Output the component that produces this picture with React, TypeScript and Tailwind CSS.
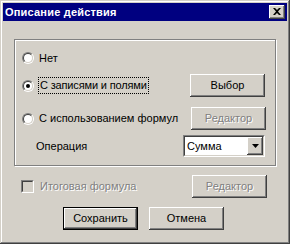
import React from 'react'

const bevelOut =
  'shadow-[inset_-1px_-1px_0_#404040,inset_1px_1px_0_#ffffff,inset_-2px_-2px_0_#808080,inset_2px_2px_0_#d4d0c8]'

function Radio({ checked }: { checked?: boolean }) {
  return (
    <div className="w-[12px] h-[12px] rounded-full border border-t-[#808080] border-l-[#808080] border-b-white border-r-white flex-shrink-0">
      <div className="w-full h-full rounded-full border border-t-[#404040] border-l-[#404040] border-b-[#d4d0c8] border-r-[#d4d0c8] bg-white flex items-center justify-center">
        {checked && <div className="w-[4px] h-[4px] rounded-full bg-black" />}
      </div>
    </div>
  )
}

function Button({
  children,
  disabled,
  isDefault,
  className = '',
}: {
  children: React.ReactNode
  disabled?: boolean
  isDefault?: boolean
  className?: string
}) {
  return (
    <div
      className={
        'w-[75px] h-[23px] flex-shrink-0 bg-[#d4d0c8] ' +
        (isDefault ? 'border border-black ' : '') +
        className
      }
    >
      <div
        className={
          'w-full h-full flex items-center justify-center ' +
          bevelOut +
          (disabled ? ' text-[#808080] [text-shadow:1px_1px_0_#ffffff]' : ' text-black')
        }
      >
        {children}
      </div>
    </div>
  )
}

export default function App() {
  return (
    <div className="w-[290px] h-[244px] bg-[#d4d0c8] p-[3px] flex flex-col font-['Liberation_Sans',Arial,sans-serif] text-[11px] leading-none text-black shadow-[inset_-1px_-1px_0_#404040,inset_1px_1px_0_#d4d0c8,inset_-2px_-2px_0_#808080,inset_2px_2px_0_#ffffff]">
      {/* Title bar */}
      <div className="h-[18px] bg-[#000080] flex items-center pl-[2px] pr-[2px]">
        <span className="text-white font-bold text-[11px] tracking-[0.2px]">Описание действия</span>
        <div className={'ml-auto w-[16px] h-[14px] bg-[#d4d0c8] flex items-center justify-center ' + bevelOut}>
          <svg width="8" height="7" viewBox="0 0 8 7" className="-mt-[1px]">
            <path d="M0 0h2l2 2 2-2h2L5 3.5 8 7H6L4 5 2 7H0l3-3.5z" fill="#000" />
          </svg>
        </div>
      </div>

      {/* Group box */}
      <div className="ml-[11px] mt-[18px] w-[262px] h-[127px] border border-[#808080] shadow-[1px_1px_0_#ffffff,inset_1px_1px_0_#ffffff] flex flex-col pt-[10px]">
        <div className="h-[16px] flex items-center pl-[7px]">
          <Radio />
          <span className="ml-[5px]">Нет</span>
        </div>

        <div className="mt-[8px] h-[23px] flex items-center pl-[7px] pr-[10px]">
          <Radio checked />
          <span className="ml-[4px] h-[17px] px-[1px] flex items-center border border-dotted border-black tracking-[-0.15px]">
            С записями и полями
          </span>
          <Button className="ml-auto">Выбор</Button>
        </div>

        <div className="mt-[10px] h-[23px] flex items-center pl-[7px] pr-[9px]">
          <Radio />
          <span className="ml-[5px]">С использованием формул</span>
          <Button disabled className="ml-auto">Редактор</Button>
        </div>

        <div className="mt-[5px] h-[22px] flex items-center pl-[21px] pr-[10px]">
          <span>Операция</span>
          <div className="ml-auto w-[82px] h-[22px] border border-t-[#808080] border-l-[#808080] border-b-white border-r-white">
            <div className="w-full h-full border border-t-[#404040] border-l-[#404040] border-b-[#d4d0c8] border-r-[#d4d0c8] bg-white flex items-center">
              <span className="pl-[2px]">Сумма</span>
              <div className={'ml-auto w-[16px] h-full bg-[#d4d0c8] flex items-center justify-center ' + bevelOut}>
                <svg width="7" height="4" viewBox="0 0 7 4">
                  <path d="M0 0h7L3.5 4z" fill="#000" />
                </svg>
              </div>
            </div>
          </div>
        </div>
      </div>

      {/* Total formula row */}
      <div className="mt-[9px] h-[23px] flex items-center pl-[18px] pr-[20px]">
        <div className="w-[13px] h-[13px] border border-t-[#808080] border-l-[#808080] border-b-white border-r-white flex-shrink-0">
          <div className="w-full h-full border border-t-[#404040] border-l-[#404040] border-b-[#d4d0c8] border-r-[#d4d0c8] bg-[#d4d0c8]" />
        </div>
        <span className="ml-[6px] text-[#808080] [text-shadow:1px_1px_0_#ffffff]">Итоговая формула</span>
        <Button disabled className="ml-auto">Редактор</Button>
      </div>

      {/* Buttons */}
      <div className="mt-[9px] flex items-center pl-[60px] gap-[11px]">
        <Button isDefault>Сохранить</Button>
        <Button>Отмена</Button>
      </div>
    </div>
  )
}
